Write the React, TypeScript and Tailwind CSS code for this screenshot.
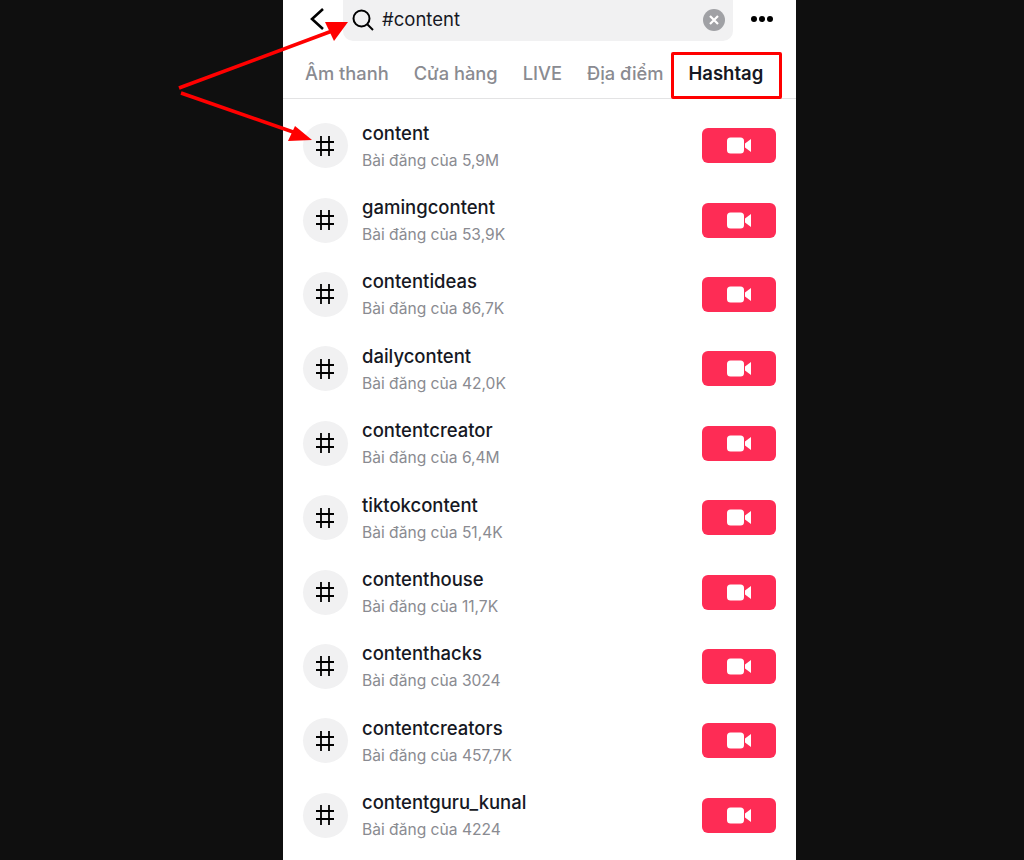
const tags = [
  { name: "content", count: "5,9M" },
  { name: "gamingcontent", count: "53,9K" },
  { name: "contentideas", count: "86,7K" },
  { name: "dailycontent", count: "42,0K" },
  { name: "contentcreator", count: "6,4M" },
  { name: "tiktokcontent", count: "51,4K" },
  { name: "contenthouse", count: "11,7K" },
  { name: "contenthacks", count: "3024" },
  { name: "contentcreators", count: "457,7K" },
  { name: "contentguru_kunal", count: "4224" },
];

const tabs = [
  { label: "Âm thanh", gap: "mr-[25px]" },
  { label: "Cửa hàng", gap: "mr-[25px]" },
  { label: "LIVE", gap: "mr-[25px]" },
  { label: "Địa điểm", gap: "" },
];

const HashIcon = () => (
  <svg className="-ml-[2px]" width="20" height="22" viewBox="0 0 20 22" fill="none" stroke="#000000" strokeWidth="1.8">
    <path d="M6 1v20M14 1v20M1 7h18M1 15h18" />
  </svg>
);

const VideoIcon = () => (
  <svg width="25" height="17" viewBox="0 0 25 17" fill="white">
    <rect x="0" y="0.5" width="17" height="16" rx="3.5" />
    <path d="M18 6.5 L24 2 V15 L18 10.5 Z" />
  </svg>
);

const TagRow = ({ name, count }: { name: string; count: string }) => (
  <div className="flex h-[74.4px] items-center pr-5 pl-5">
    <div className="flex h-[45px] w-[45px] shrink-0 items-center justify-center rounded-full bg-[#f1f1f2]">
      <HashIcon />
    </div>
    <div className="ml-[14px] flex-1 pt-[1px]">
      <div className="text-[18.5px] leading-[24px] font-medium text-[#161823]">{name}</div>
      <div className="mt-[5px] text-[15.6px] leading-[22px] text-[#8a8b91]">Bài đăng của {count}</div>
    </div>
    <button className="flex h-[35px] w-[74px] items-center justify-center rounded-[6px] bg-[#fe2c55]">
      <VideoIcon />
    </button>
  </div>
);

export default function App() {
  return (
    <div className="relative h-[860px] w-full overflow-hidden bg-[#0f0f0f] pl-[283px] font-['Inter',sans-serif]">
      <div className="h-full w-[513px] bg-white">
        <div className="flex h-[52px] items-start">
          <div className="flex h-[38px] w-[60px] items-center pl-[26px]">
            <svg width="16" height="24" viewBox="0 0 16 24" fill="none" stroke="#000000" strokeWidth="2.6">
              <path d="M14 2 L3 12 L14 22" />
            </svg>
          </div>
          <div className="flex h-[41px] w-[390px] items-center rounded-br-[10px] rounded-bl-[10px] bg-[#f1f1f2] pr-[8px] pb-[2px] pl-[9px]">
            <svg width="22" height="22" viewBox="0 0 22 22" fill="none" stroke="#000000" strokeWidth="2">
              <circle cx="9.5" cy="9.5" r="8" />
              <path d="M15.5 15.5 L21 21" />
            </svg>
            <span className="ml-[8px] flex-1 text-[18.5px] text-[#161823]">#content</span>
            <div className="flex h-[22px] w-[22px] items-center justify-center rounded-full bg-[#a0a1a5]">
              <svg width="10" height="10" viewBox="0 0 10 10" fill="none" stroke="white" strokeWidth="2.2">
                <path d="M1 1 L9 9 M9 1 L1 9" />
              </svg>
            </div>
          </div>
          <div className="flex h-[38px] flex-1 items-center justify-center gap-[2px] pr-[6px]">
            <span className="h-[6px] w-[6px] rounded-full bg-[#000000]" />
            <span className="h-[6px] w-[6px] rounded-full bg-[#000000]" />
            <span className="h-[6px] w-[6px] rounded-full bg-[#000000]" />
          </div>
        </div>
        <div className="flex h-[47px] items-center border-b border-[#e3e3e4] pb-[3px] pl-[22px]">
          {tabs.map((t) => (
            <span key={t.label} className={`text-[18.3px] font-medium text-[#8a8b91] ${t.gap}`}>
              {t.label}
            </span>
          ))}
          <span className="relative ml-[25px] text-[18.5px] font-semibold text-[#161823]">
            Hashtag
            <span className="absolute top-[-8px] right-[-19px] bottom-[-12px] left-[-18px] rounded-[2px] border-[3px] border-[#ff0000]" />
          </span>
        </div>
        <div className="pt-[9.5px]">
          {tags.map((t) => (
            <TagRow key={t.name} name={t.name} count={t.count} />
          ))}
        </div>
      </div>
      <svg className="absolute top-0 left-0" width="1024" height="860" fill="none">
        <path d="M179 88 L332 31" stroke="#ff0000" strokeWidth="3.5" />
        <path d="M348 22 L325 22 L334 41 Z" fill="#ff0000" />
        <path d="M181 93 L296 133" stroke="#ff0000" strokeWidth="3.5" />
        <path d="M312 140 L295 126 L288 141 Z" fill="#ff0000" />
      </svg>
    </div>
  );
}
